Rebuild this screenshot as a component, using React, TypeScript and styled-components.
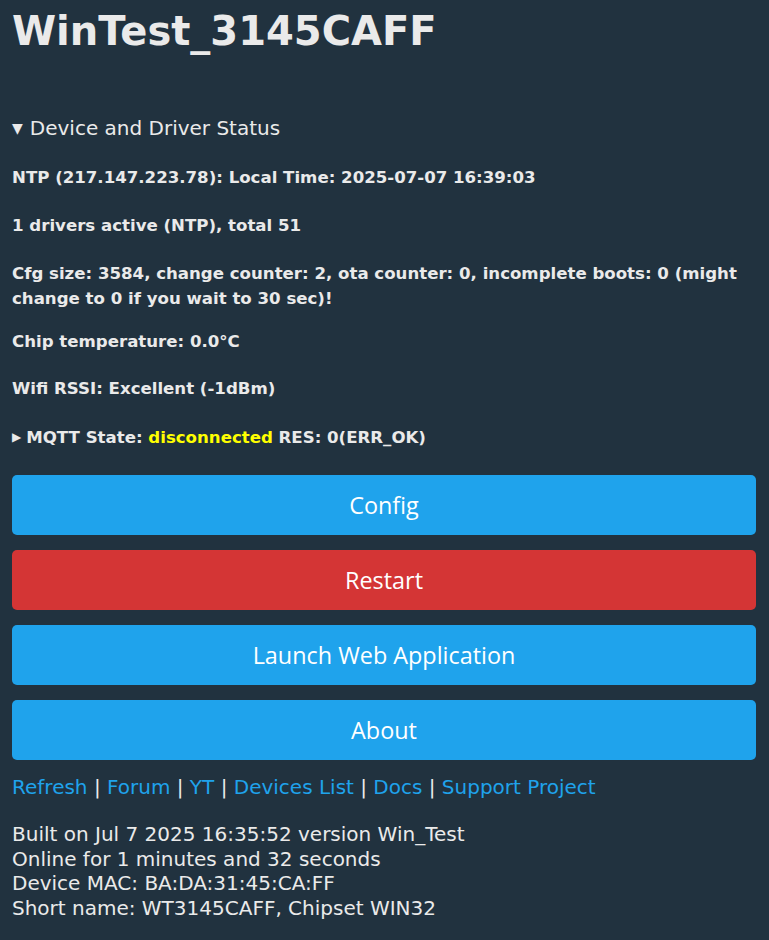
import styled, { createGlobalStyle } from "styled-components";

const GlobalStyle = createGlobalStyle`
  html, body {
    margin: 0;
    background: #21323f;
  }
  body {
    font-family: "DejaVu Sans", Verdana, sans-serif;
    color: #eaeaea;
  }
`

const Page = styled.div`
  padding: 0 13px 20px 12px;
`

const Title = styled.h1`
  margin: 0;
  padding-top: 8px;
  font-size: 40px;
  line-height: 46px;
  font-weight: bold;
`

const Details = styled.details`
  margin-top: 62px;
  summary {
    list-style: none;
    font-size: 20px;
    line-height: 24px;
    cursor: pointer;
  }
  summary::-webkit-details-marker {
    display: none;
  }
`

const Arrow = styled.span<{ $small?: boolean }>`
  font-size: ${(p) => (p.$small ? "12px" : "14px")};
  margin-right: ${(p) => (p.$small ? "5px" : "7px")};
  vertical-align: 2px;
`

const StatusLine = styled.div<{ $gap?: number }>`
  font-size: 16.6px;
  font-weight: bold;
  line-height: 25px;
  margin-top: ${(p) => p.$gap ?? 23}px;
`

const Yellow = styled.span`
  color: #ffff00;
`

const Buttons = styled.div`
  display: flex;
  flex-direction: column;
  gap: 15px;
  margin-top: 25px;
`

const Button = styled.button<{ $red?: boolean }>`
  height: 60px;
  border: none;
  border-radius: 5px;
  background: ${(p) => (p.$red ? "#d43535" : "#1fa3ec")};
  color: #fff;
  font-family: "Open Sans", "Noto Sans", sans-serif;
  font-size: 23.4px;
  cursor: pointer;
`

const Links = styled.div`
  margin-top: 15px;
  font-size: 20px;
  line-height: 24px;
  a {
    color: #1fa3ec;
    text-decoration: none;
  }
`

const Footer = styled.div`
  margin-top: 23px;
  font-size: 20px;
  line-height: 24.6px;
`

const links = ["Refresh", "Forum", "YT", "Devices List", "Docs", "Support Project"];

export default function App() {
  return (
    <>
      <GlobalStyle />
      <Page>
        <Title>WinTest_3145CAFF</Title>
        <Details open>
          <summary>
            <Arrow>▼</Arrow>Device and Driver Status
          </summary>
          <StatusLine $gap={25}>NTP (217.147.223.78): Local Time: 2025-07-07 16:39:03</StatusLine>
          <StatusLine>1 drivers active (NTP), total 51</StatusLine>
          <StatusLine>
            Cfg size: 3584, change counter: 2, ota counter: 0, incomplete boots: 0 (might change to 0 if you wait to 30 sec)!
          </StatusLine>
          <StatusLine $gap={18}>Chip temperature: 0.0°C</StatusLine>
          <StatusLine $gap={22}>Wifi RSSI: Excellent (-1dBm)</StatusLine>
          <StatusLine $gap={24}>
            <Arrow $small>▶</Arrow>MQTT State: <Yellow>disconnected</Yellow> RES: 0(ERR_OK)
          </StatusLine>
        </Details>
        <Buttons>
          <Button>Config</Button>
          <Button $red>Restart</Button>
          <Button>Launch Web Application</Button>
          <Button>About</Button>
        </Buttons>
        <Links>
          {links.map((l, i) => (
            <span key={l}>
              {i > 0 && " | "}
              <a href="#">{l}</a>
            </span>
          ))}
        </Links>
        <Footer>
          Built on Jul 7 2025 16:35:52 version Win_Test
          <br />
          Online for 1 minutes and 32 seconds
          <br />
          Device MAC: BA:DA:31:45:CA:FF
          <br />
          Short name: WT3145CAFF, Chipset WIN32
        </Footer>
      </Page>
    </>
  );
}
